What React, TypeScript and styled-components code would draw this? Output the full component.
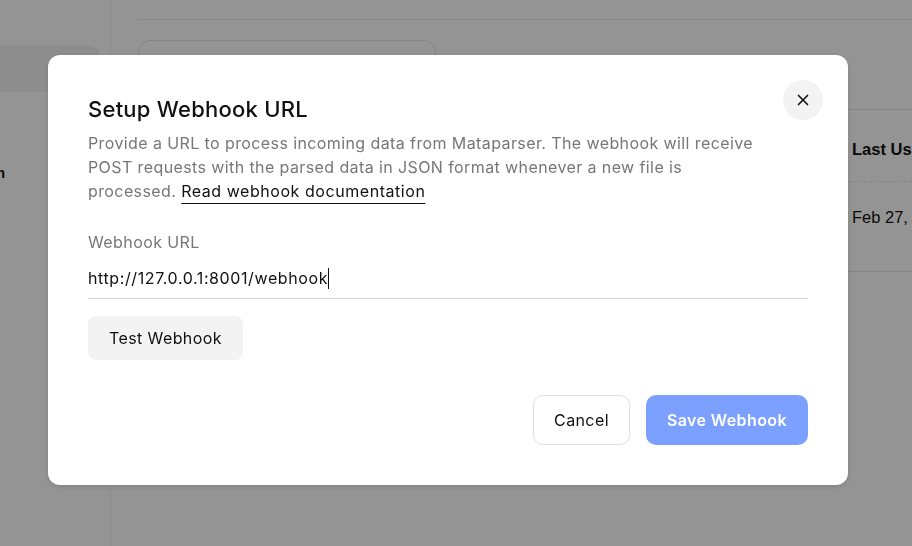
import React from "react";
import styled, { createGlobalStyle } from "styled-components";

const GlobalStyle = createGlobalStyle`
  html, body {
    margin: 0;
    padding: 0;
    height: 100%;
    overflow: hidden;
    background: #fff;
  }
  #root {
    height: 100%;
  }
`;

const INK = "#111111";
const MUTED = "#777777";
const LINE = "#d4d4d4";

/* ---------- page behind the dialog ---------- */

const Page = styled.div`
  display: flex;
  height: 100%;
  font-family: "Liberation Sans", Arial, sans-serif;
  color: ${INK};
`;

const Sidebar = styled.aside`
  width: 110px;
  flex-shrink: 0;
  border-right: 1px solid #f2f2f2;
  padding-top: 45px;
  display: flex;
  flex-direction: column;
`;

const NavItem = styled.div<{ active?: boolean }>`
  width: 100px;
  height: 47px;
  box-sizing: border-box;
  border-radius: 0 12px 12px 0;
  background: ${({ active }) => (active ? "#f3f3f3" : "transparent")};
  display: flex;
  align-items: center;
  font-size: 15px;
  font-weight: 700;
  overflow: hidden;
`;

const NavLabel = styled.span`
  margin-left: -4px;
`;

const Main = styled.main`
  flex: 1;
  padding: 0 0 0 26px;
  display: flex;
  flex-direction: column;
  overflow: hidden;
`;

const TopBar = styled.div`
  height: 19px;
  border-bottom: 1px solid #ececec;
`;

const SearchCard = styled.div`
  margin-top: 20px;
  margin-left: 1px;
  width: 298px;
  height: 44px;
  box-sizing: border-box;
  border: 1px solid #e6e6e6;
  border-radius: 12px;
`;

const Table = styled.div`
  margin-top: 25px;
  border-top: 1px solid #e8e8e8;
`;

const TableRow = styled.div<{ header?: boolean }>`
  display: grid;
  grid-template-columns: 715px 200px;
  height: ${({ header }) => (header ? "72px" : "90px")};
  box-sizing: border-box;
  padding-top: ${({ header }) => (header ? "29px" : "25px")};
  border-bottom: 1px ${({ header }) => (header ? "dashed" : "solid")} #e6e6e6;
`;

const Cell = styled.div<{ header?: boolean }>`
  font-size: 16.5px;
  line-height: 20px;
  font-weight: ${({ header }) => (header ? 700 : 400)};
  white-space: nowrap;
`;

/* ---------- dialog ---------- */

const Overlay = styled.div`
  position: fixed;
  inset: 0;
  background: rgba(0, 0, 0, 0.42);
  display: flex;
  align-items: flex-start;
  padding: 55px 0 0 48px;
`;

const Dialog = styled.div`
  position: relative;
  width: 800px;
  box-sizing: border-box;
  padding: 40px;
  background: #fff;
  border-radius: 12px;
  box-shadow: 0 2px 6px rgba(0, 0, 0, 0.12);
  font-family: Inter, "Noto Sans", sans-serif;
  letter-spacing: 0.4px;
  color: ${INK};
  display: flex;
  flex-direction: column;
`;

const CloseButton = styled.button`
  position: absolute;
  top: 25px;
  right: 25px;
  width: 40px;
  height: 40px;
  border: none;
  border-radius: 50%;
  background: #f3f3f3;
  display: flex;
  align-items: center;
  justify-content: center;
  padding: 0;
  cursor: pointer;
`;

const Title = styled.h2`
  margin: 0;
  font-size: 22px;
  line-height: 28px;
  font-weight: 500;
  letter-spacing: 0.25px;
`;

const Description = styled.p`
  margin: 8px 0 0;
  font-size: 16px;
  line-height: 24px;
  color: ${MUTED};
`;

const DocLink = styled.a`
  color: ${INK};
  letter-spacing: 0.55px;
  text-decoration: underline;
  text-underline-offset: 6px;
  text-decoration-thickness: 1px;
`;

const FieldLabel = styled.label`
  margin-top: 27px;
  font-size: 16px;
  line-height: 24px;
  color: ${MUTED};
`;

const UrlField = styled.div`
  margin-top: 4px;
  height: 40px;
  display: flex;
  align-items: center;
  font-size: 16px;
  letter-spacing: 0.6px;
  border-bottom: 1px solid ${LINE};
`;

const Caret = styled.span`
  display: inline-block;
  width: 1px;
  height: 21px;
  background: ${INK};
`;

const Button = styled.button<{ variant: "soft" | "outline" | "primary" }>`
  font-family: Inter, "Noto Sans", sans-serif;
  font-size: 16px;
  letter-spacing: 0.4px;
  border-radius: ${({ variant }) => (variant === "soft" ? "8px" : "10px")};
  padding: 0 ${({ variant }) => (variant === "outline" ? "20px" : "21px")};
  cursor: pointer;
  height: ${({ variant }) => (variant === "soft" ? "44px" : "50px")};
  font-weight: ${({ variant }) => (variant === "primary" ? 600 : 400)};
  color: ${({ variant }) => (variant === "primary" ? "#fff" : INK)};
  background: ${({ variant }) =>
    variant === "soft" ? "#f3f3f3" : variant === "primary" ? "#7ba0ff" : "#fff"};
  border: ${({ variant }) =>
    variant === "outline" ? "1px solid #e0e0e0" : "none"};
`;

const TestRow = styled.div`
  margin-top: 17px;
  display: flex;
`;

const Footer = styled.div`
  margin-top: 35px;
  display: flex;
  justify-content: flex-end;
  gap: 16px;
`;

const XIcon = () => (
  <svg width="18" height="18" viewBox="0 0 24 24" fill="none" stroke={INK} strokeWidth="2.2" strokeLinecap="round">
    <path d="M6 6l12 12M18 6L6 18" />
  </svg>
);

export default function App() {
  return (
    <>
      <GlobalStyle />
      <Page>
        <Sidebar>
          <NavItem active />
          <NavItem style={{ marginTop: 57 }}>
            <NavLabel>n</NavLabel>
          </NavItem>
        </Sidebar>
        <Main>
          <TopBar />
          <SearchCard />
          <Table>
            <TableRow header>
              <Cell header>Name</Cell>
              <Cell header>Last Used</Cell>
            </TableRow>
            <TableRow>
              <Cell>Mataparser</Cell>
              <Cell>Feb 27, 2025</Cell>
            </TableRow>
          </Table>
        </Main>
      </Page>

      <Overlay>
        <Dialog role="dialog" aria-labelledby="webhook-title">
          <CloseButton aria-label="Close">
            <XIcon />
          </CloseButton>
          <Title id="webhook-title">Setup Webhook URL</Title>
          <Description>
            Provide a URL to process incoming data from Mataparser. The webhook will receive
            <br />
            POST requests with the parsed data in JSON format whenever a new file is
            <br />
            processed. <DocLink href="#">Read webhook documentation</DocLink>
          </Description>
          <FieldLabel>Webhook URL</FieldLabel>
          <UrlField>
            http://127.0.0.1:8001/webhook
            <Caret />
          </UrlField>
          <TestRow>
            <Button variant="soft">Test Webhook</Button>
          </TestRow>
          <Footer>
            <Button variant="outline">Cancel</Button>
            <Button variant="primary">Save Webhook</Button>
          </Footer>
        </Dialog>
      </Overlay>
    </>
  );
}
